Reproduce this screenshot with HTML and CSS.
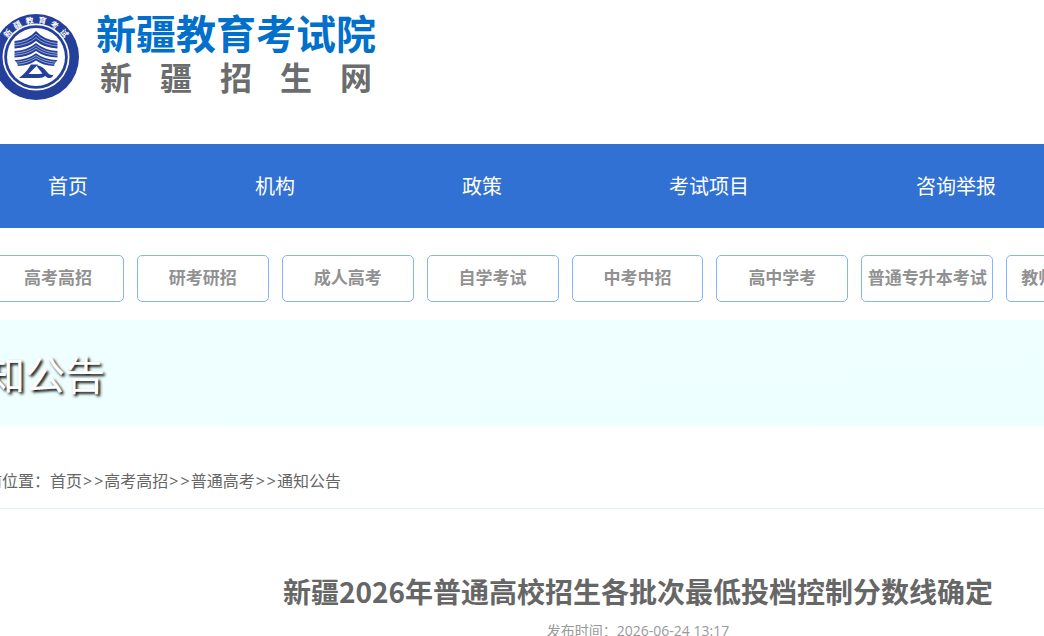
FILE: index.html
```html
<!DOCTYPE html>
<html lang="zh-CN">
<head>
<meta charset="utf-8">
<title>新疆教育考试院</title>
<link rel="stylesheet" href="styles.css">
</head>
<body>
<div class="page">
  <header class="header">
    <svg class="emblem" viewBox="0 0 88 88" aria-hidden="true">
      <circle cx="44" cy="44" r="43" fill="#24409a"/>
      <circle cx="44" cy="44" r="33.5" fill="#fff"/>
      <circle cx="44" cy="44" r="31.8" fill="#24409a"/>
      <circle cx="44" cy="44" r="29" fill="#fff"/>
      <g class="emblem-text">
        <text x="44" y="10" transform="rotate(-50 44 44)">新</text>
        <text x="44" y="10" transform="rotate(-30 44 44)">疆</text>
        <text x="44" y="10" transform="rotate(-10 44 44)">教</text>
        <text x="44" y="10" transform="rotate(10 44 44)">育</text>
        <text x="44" y="10" transform="rotate(30 44 44)">考</text>
        <text x="44" y="10" transform="rotate(50 44 44)">试</text>
      </g>
      <g fill="#24409a">
        <path d="M44 18Q52 27 65.500 28V35.500Q52 35 44 28Q36 35 22.500 35.500V28Q36 27 44 18Z"/>
        <path d="M44 30Q52 37 65.500 38V44.500Q52 44 44 38Q36 44 22.500 44.500V38Q36 37 44 30Z"/>
        <path d="M44 40.300Q52 46.500 65.500 47.300Q63 49.500 62 53Q51 52.500 44 47.500Q37 52.500 26 53Q25 49.500 22.500 47.300Q36 46.500 44 40.300Z"/>
      </g>
      <g fill="none" stroke="#fff" stroke-width=".5">
        <path d="M22 30.500Q36 29.500 44 21.200Q52 29.500 66 30.500"/>
        <path d="M22 33Q36 32 44 24.600Q52 32 66 33"/>
        <path d="M22 40.300Q36 39.300 44 32.700Q52 39.300 66 40.300"/>
        <path d="M22 42.400Q36 41.500 44 35.300Q52 41.500 66 42.400"/>
        <path d="M22 49.400Q36 48.500 44 42.700Q52 48.500 66 49.400"/>
        <path d="M24 51.300Q36 50.500 44 45Q52 50.500 64 51.300"/>
      </g>
      <path d="M39 51.500H46L36.500 61H46.500Q50 61 51.500 59.500L54 62Q52 65 47 65H27Q34 60 39 51.500Z" fill="#24409a"/>
      <path d="M44 52Q51 53 55 59Q58 63.500 61.500 61.500Q60 66.500 55 64.500Q50 61 44 52Z" fill="#24409a"/>
    </svg>
    <div class="brand">
      <div class="brand-name">新疆教育考试院</div>
      <div class="brand-sub"><span>新</span><span>疆</span><span>招</span><span>生</span><span>网</span></div>
    </div>
  </header>

  <nav class="nav">
    <a href="#">首页</a>
    <a href="#">机构</a>
    <a href="#">政策</a>
    <a href="#">考试项目</a>
    <a href="#">咨询举报</a>
  </nav>

  <nav class="subnav">
    <a href="#">高考高招</a>
    <a href="#">研考研招</a>
    <a href="#">成人高考</a>
    <a href="#">自学考试</a>
    <a href="#">中考中招</a>
    <a href="#">高中学考</a>
    <a href="#">普通专升本考试</a>
    <a href="#">教师资格考试</a>
  </nav>

  <div class="banner">通知公告</div>

  <nav class="crumbs">
    <span>当前位置：</span><a href="#">首页</a><span class="sep"><span>&gt;</span><span>&gt;</span></span><a href="#">高考高招</a><span class="sep"><span>&gt;</span><span>&gt;</span></span><a href="#">普通高考</a><span class="sep"><span>&gt;</span><span>&gt;</span></span><a href="#">通知公告</a>
  </nav>

  <main class="article">
    <h1 class="title">新疆2026年普通高校招生各批次最低投档控制分数线确定</h1>
    <p class="date">发布时间：2026-06-24 13:17</p>
  </main>
</div>
</body>
</html>
```
FILE: styles.css
```css
* {
  box-sizing: border-box;
}

body {
  margin: 0;
  overflow: hidden;
  background: #fff;
  color: #666;
  font-family: "Open Sans", "Noto Sans CJK SC", sans-serif;
}

a {
  color: inherit;
  text-decoration: none;
}

/* The page is wider than the window and centred right of its middle. */
.page {
  margin: 0 -294px 0 -62px;
}

.header {
  display: flex;
  align-items: flex-start;
  gap: 16px;
  height: 144px;
  padding: 13px 54px 0;
}

.emblem {
  flex: none;
  width: 88px;
  height: 88px;
}

.emblem-text {
  fill: #fff;
  font-size: 8px;
  font-weight: 700;
  text-anchor: middle;
}

.brand-name {
  color: #0070cc;
  font-size: 40px;
  font-weight: 700;
  line-height: 42px;
}

.brand-sub {
  display: flex;
  gap: 28px;
  padding-left: 4px;
  color: #6b6c6e;
  font-size: 32px;
  font-weight: 700;
  line-height: 46px;
}

.nav {
  display: flex;
  gap: 167px;
  padding: 1px 110px 0;
  background: #3071d3;
  color: #fff;
  font-size: 20px;
  line-height: 83px;
  white-space: nowrap;
}

.subnav {
  display: grid;
  grid-template-columns: repeat(9, 1fr);
  gap: 13px;
  padding: 27px 55px 18px 54px;
}

.subnav a {
  padding-bottom: 2px;
  border: 1px solid #82b4ff;
  border-radius: 5px;
  color: #919191;
  font-size: 17px;
  font-weight: 700;
  line-height: 43px;
  text-align: center;
  white-space: nowrap;
}

.banner {
  padding: 4px 0 0 7px;
  background: linear-gradient(175deg, #efffff 50%, #ebfeff);
  color: #fff;
  font-size: 40px;
  line-height: 102px;
  text-shadow: 2px 2px 3px #000;
}

.crumbs {
  padding: 28px 32px 0;
  border-bottom: 1px solid #e3eff7;
  font-size: 16px;
  line-height: 54px;
  white-space: nowrap;
}

.sep {
  display: inline-flex;
  gap: 2px;
  padding: 0 1px;
}

.article {
  padding-top: 58px;
  text-align: center;
}

.title {
  margin: 0;
  font-family: "Noto Sans CJK SC", sans-serif;
  font-size: 28px;
  font-weight: 700;
  line-height: 48px;
}

.date {
  margin: 0;
  color: #999;
  font-size: 14px;
  line-height: 32px;
}
```
